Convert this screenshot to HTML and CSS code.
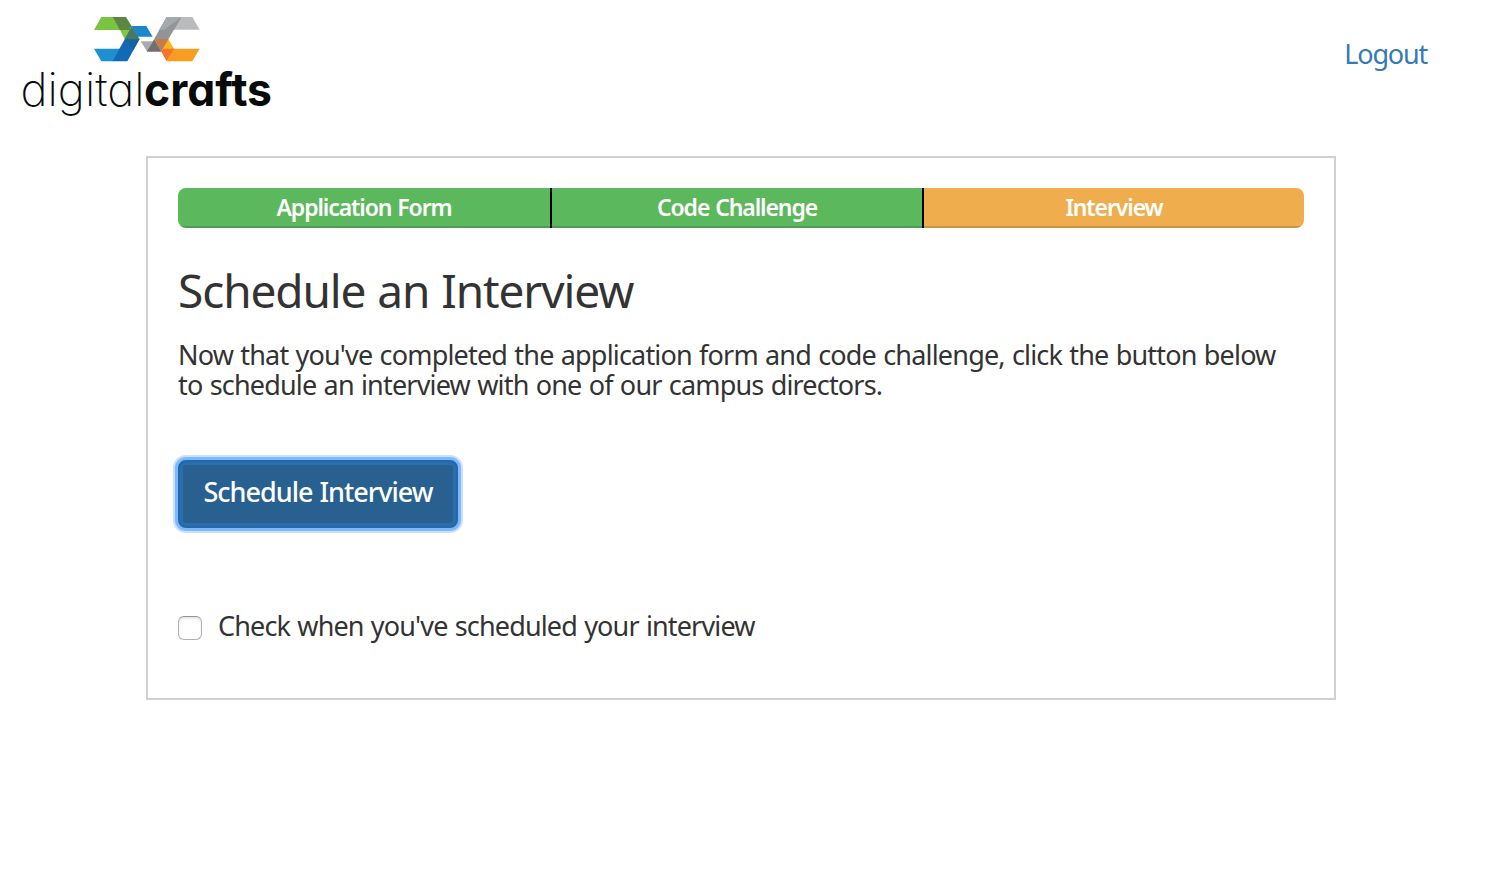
FILE: index.html
```html
<!DOCTYPE html>
<html lang="en">
<head>
<meta charset="utf-8">
<title>Schedule an Interview</title>
<link rel="stylesheet" href="styles.css">
</head>
<body>
<header class="header">
  <svg class="logo" width="270" height="120" viewBox="0 0 270 120" role="img" aria-label="digitalcrafts">
    <g transform="translate(70 8) scale(.33333)">
      <path fill="#79c440" d="M52 27H87L108 66H30z"/>
      <path fill="#83c63f" d="M107 64H142L123 95z"/>
      <path fill="#5b8840" d="M86 27H126L143 55L137 66H107z"/>
      <path fill="#1b86cb" d="M142 54H187L206 86H160z"/>
      <path fill="#1e90cf" d="M30 122H108L86 160H52z"/>
      <path fill="#1269b7" d="M123 92H167L130 160H85z"/>
      <path fill="#1761a0" d="M123 92H167L148 127z"/>
      <path fill="#477866" d="M143 55L167 94H122z"/>
      <path fill="#b9bbbd" d="M290 27H325L347 65H269z"/>
      <path fill="#929496" d="M226 65L248 27H292L253 94H210z"/>
      <path fill="#a4a9ac" d="M248 27H292L270 65H226z"/>
      <path fill="#939597" d="M292 27L270 65H240z"/>
      <path fill="#a9abae" d="M170 100H207L190 131z"/>
      <path fill="#6f7072" d="M211 93L233 131H188z"/>
      <path fill="#fdb515" d="M253 93L270 123H237z"/>
      <path fill="#f99d20" d="M269 122H347L325 160H248z"/>
      <path fill="#f4762a" d="M232 131L237 122H271L248 160z"/>
      <path fill="#c77b4b" d="M211 93H254L232 131z"/>
    </g>
    <text class="logo-light" x="6.5" y="106" textLength="124" lengthAdjust="spacingAndGlyphs">digital</text>
    <text class="logo-bold" x="130" y="106" textLength="128" lengthAdjust="spacingAndGlyphs">crafts</text>
  </svg>
  <a class="logout" href="#">Logout</a>
</header>
<main class="panel">
  <div class="progress">
    <div class="step done">Application Form</div>
    <div class="step done">Code Challenge</div>
    <div class="step current">Interview</div>
  </div>
  <h1 class="title">Schedule an Interview</h1>
  <p class="intro">Now that you've completed the application form and code challenge, click the button below<br>to schedule an interview with one of our campus directors.</p>
  <button class="schedule" type="button">Schedule Interview</button>
  <label class="confirm"><input class="checkbox" type="checkbox"><span>Check when you've scheduled your interview</span></label>
</main>
</body>
</html>
```
FILE: styles.css
```css
* { box-sizing: border-box; }
body {
  margin: 0;
  background: #fff;
  color: #333;
  font: 27px/30px "Noto Sans", "Open Sans", sans-serif;
}
.header {
  display: flex;
  justify-content: space-between;
  height: 156px;
  padding: 0 61px 0 14px;
}
.logo { display: block; }
.logo-light, .logo-bold {
  font-family: Inter, sans-serif;
  font-feature-settings: "cv11";
  font-size: 46px;
  fill: #070b0b;
}
.logo-light { font-weight: 250; }
.logo-bold { font-weight: 700; }
.logout {
  margin-top: 39px;
  height: 30px;
  color: #337ab7;
  text-decoration: none;
  letter-spacing: -1.2px;
}
.panel {
  width: 1190px;
  height: 544px;
  margin-left: 146px;
  padding: 30px;
  border: 2px solid #d3cfcf;
}
.progress {
  display: flex;
  height: 40px;
  border-radius: 8px;
  overflow: hidden;
}
.step {
  width: 374px;
  color: #fff;
  font-size: 23px;
  font-weight: 600;
  line-height: 38px;
  text-align: center;
  border-right: 2px solid #000;
  letter-spacing: -1.1px;
  word-spacing: 1px;
}
.step + .step { width: 372px; }
.step.current { width: auto; flex: 1; border-right: 0; }
.done { background: linear-gradient(#5cb85c 38px, #4f9e4f 38px); }
.current { background: linear-gradient(#f0ad4e 38px, #ce9443 38px); }
.title {
  margin: 35px 0 0;
  font-size: 46px;
  font-weight: 400;
  line-height: 54px;
  letter-spacing: -1.1px;
  word-spacing: 1px;
}
.intro {
  margin: 23px 0 0;
  white-space: nowrap;
  letter-spacing: -.82px;
  word-spacing: 1px;
}
.schedule {
  display: block;
  width: 280px;
  height: 68px;
  margin: 60px 0 0;
  padding: 0 0 4px;
  color: #fff;
  background: #286090;
  border: 2px solid #2468aa;
  border-radius: 8px;
  box-shadow: inset 0 0 0 3px #296eaf, 0 0 0 3px #7db9fd, 0 0 0 5px #c9e1ff;
  font: 500 27px/30px "Noto Sans", "Open Sans", sans-serif;
  letter-spacing: -1px;
  word-spacing: 1px;
}
.confirm {
  display: flex;
  align-items: center;
  margin-top: 83px;
  letter-spacing: -.85px;
  word-spacing: 1px;
}
.checkbox {
  appearance: none;
  width: 24px;
  height: 24px;
  margin: 3px 16px 0 0;
  background: #fff;
  border: 1px solid #b0b0b0;
  border-top-color: #929292;
  border-radius: 6px;
  box-shadow: inset 0 2px 2px #e8e8e8;
}
```
